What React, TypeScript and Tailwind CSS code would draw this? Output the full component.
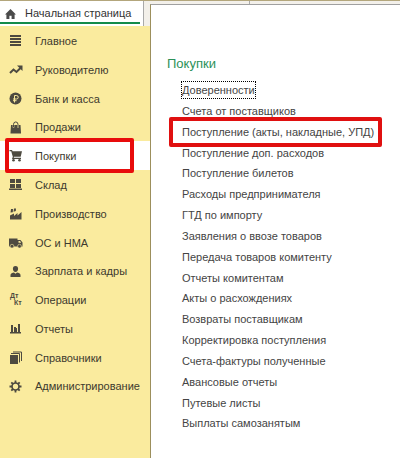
import type { ReactNode } from "react";

type Section = { name: string; icon: ReactNode };

const sections: Section[] = [
  { name: "Главное", icon: <path d="M0 0h11v2H0zM0 3h11v2H0zM0 6h11v2H0zM0 9h11v2H0z" /> },
  {
    name: "Руководителю",
    icon: (
      <>
        <path d="M0 9l3.500-3.500 3 2.500 4-4" fill="none" stroke="currentColor" strokeWidth="2" />
        <path d="M7 1.500H12.500v5.500z" />
      </>
    ),
  },
  {
    name: "Банк и касса",
    icon: (
      <>
        <circle cx="5.500" cy="5.500" r="6" />
        <path d="M4.500 9.500V2.500h2a1.700 1.700 0 0 1 0 3.500H3M3 7.700H6.500" fill="none" stroke="#faeb9e" strokeWidth="1" />
      </>
    ),
  },
  {
    name: "Продажи",
    icon: (
      <>
        <path d="M1 3h9.500l0.500 8.500H0.500z" />
        <path d="M3.500 5.500V2.500a2.200 2.500 0 0 1 4.500 0v3" fill="none" stroke="#faeb9e" strokeWidth="1.600" />
        <path d="M3.500 5V2.500a2.200 2.500 0 0 1 4.500 0v2.500" fill="none" stroke="currentColor" strokeWidth="1" />
      </>
    ),
  },
  {
    name: "Покупки",
    icon: (
      <>
        <path d="M-0.500 0h2.500l0.600 1.300H12L10.700 6.800H4L3.700 7.700h7.300v1.300H2L2.800 6.800 1.200 1.200H-0.500z" />
        <circle cx="3.500" cy="10.200" r="1.300" />
        <circle cx="9.500" cy="10.200" r="1.300" />
      </>
    ),
  },
  {
    name: "Склад",
    icon: <path d="M0 0h5v4H0zM6 0h5v4H6zM0 5h5v4H0zM6 5h5v4H6zM-1 9.500h13v1.500H-1z" />,
  },
  {
    name: "Производство",
    icon: <path d="M0 11.500V7.500l4-2v2.500l3.500-3v2.500L11.500 4v7.500zM0.500 4.500L1 1h2L2.800 4.200zM3.500 3.800L4 0.500h2L5.800 3z" />,
  },
  {
    name: "ОС и НМА",
    icon: (
      <>
        <path d="M-1 1.500h8.500v8H-1zM7.500 3h3L12.500 5.500v4h-5z" />
        <circle cx="2" cy="9.200" r="1.900" stroke="#faeb9e" strokeWidth="0.600" />
        <circle cx="9.500" cy="9.200" r="1.900" stroke="#faeb9e" strokeWidth="0.600" />
        <path d="M8.500 4h1.500L11.200 5.700H8.500z" fill="#faeb9e" />
      </>
    ),
  },
  {
    name: "Зарплата и кадры",
    icon: <path d="M5.500 0c1.900 0 2.600 1.200 2.600 2.700S7 6 5.500 6 2.900 4.200 2.900 2.700 3.600 0 5.500 0zM0.500 11V9C0.500 7.500 2.500 6.800 4 6.500L5.500 7.800 7 6.500C8.500 6.800 10.500 7.500 10.500 9v2z" />,
  },
  {
    name: "Операции",
    icon: (
      <g fontFamily="Liberation Sans, sans-serif" fontSize="7" fontWeight="700">
        <text x="0" y="4">Дт</text>
        <text x="4" y="11">Кт</text>
      </g>
    ),
  },
  { name: "Отчеты", icon: <path d="M1 2h2v7H1zM4 4h2v5H4zM6 5h1v4h-1zM8 1h2v8H8zM0 9h11v1.500H0z" /> },
  {
    name: "Справочники",
    icon: (
      <>
        <path d="M0 3h8v9H0z" />
        <path d="M1 1.500h8.500v9M3 0h8.500v9" fill="none" stroke="currentColor" strokeWidth="1" />
      </>
    ),
  },
  {
    name: "Администрирование",
    icon: (
      <>
        <circle cx="5.500" cy="5.500" r="3.500" fill="none" stroke="currentColor" strokeWidth="1.700" />
        <path
          d="M5.500 -0.500v2.500M5.500 9V11.500M-0.500 5.500h2.500M9 5.500H11.500M1.300 1.300l1.700 1.700M8 8l1.700 1.700M9.700 1.300L8 3M3 8l-1.700 1.700"
          stroke="currentColor"
          strokeWidth="1.800"
        />
      </>
    ),
  },
];

const commands = [
  "Доверенности",
  "Счета от поставщиков",
  "Поступление (акты, накладные, УПД)",
  "Поступление доп. расходов",
  "Поступление билетов",
  "Расходы предпринимателя",
  "ГТД по импорту",
  "Заявления о ввозе товаров",
  "Передача товаров комитенту",
  "Отчеты комитентам",
  "Акты о расхождениях",
  "Возвраты поставщикам",
  "Корректировка поступления",
  "Счета-фактуры полученные",
  "Авансовые отчеты",
  "Путевые листы",
  "Выплаты самозанятым",
];

const activeSection = "Покупки";
const focusedCommand = "Доверенности";
const markedCommand = "Поступление (акты, накладные, УПД)";

export default function App() {
  return (
    <div className="flex min-h-screen border-t border-[#b3a67c] bg-[#f3f0ea] font-['Liberation_Sans',Arial,sans-serif] text-[11px] text-[#444444]">
      {/* Sections */}
      <aside className="flex w-[150px] shrink-0 flex-col">
        <div className="flex h-[25px]">
          <button className="flex w-[144px] flex-col border-r border-[#a9a9a9] bg-white text-left text-[#333333]">
            <span className="flex h-[21px] items-center gap-[9px] pt-1 pl-[5px] whitespace-nowrap">
              <svg viewBox="0 0 12 11" className="h-[10px] w-[11px] shrink-0 fill-[#4a4a4a]">
                <path d="M6 0l6 6h-1.500v5H7.200V7.500H4.800V11H1.500V6H0z" />
              </svg>
              Начальная страница
            </span>
            <span className="mr-[3px] h-0.5 self-stretch bg-[#138b4a]" />
          </button>
        </div>
        <nav className="flex-1 bg-[#faeb9e]">
          <ul className="grid h-[374px] auto-rows-fr">
            {sections.map(({ name, icon }) => (
              <li key={name} className={name === activeSection ? "relative bg-white" : ""}>
                <button className="flex h-full w-full items-center gap-[13px] pt-0.5 pl-[10px] text-left whitespace-nowrap text-[#3d3a2e]">
                  <svg viewBox="0 0 12 12" className="size-3 shrink-0 overflow-visible fill-current text-[#4d4a40]">
                    {icon}
                  </svg>
                  {name}
                </button>
                {name === activeSection && (
                  <span className="pointer-events-none absolute -inset-y-[3px] right-4 left-[5px] rounded-xs border-4 border-[#e80c0c]" />
                )}
              </li>
            ))}
          </ul>
        </nav>
      </aside>

      {/* Commands of the open section */}
      <div className="flex min-w-0 flex-1 flex-col">
        <div className="flex h-[3px]">
          <span className="w-[100px] border-r border-[#a9a9a9]" />
        </div>
        <main className="flex-1 border-t border-l border-t-[#a0a0a0] border-l-[#9c8f5c] bg-white pt-[49px] pl-4">
          <h1 className="h-[26px] text-[13px] leading-5 text-[#2c9158]">{activeSection}</h1>
          <ul className="grid h-[354px] auto-rows-fr pl-[15px]">
            {commands.map((name) => (
              <li key={name} className="flex items-center whitespace-nowrap">
                <a
                  href="#"
                  className={
                    name === focusedCommand
                      ? "leading-4 outline-1 outline-dotted outline-black"
                      : name === markedCommand
                        ? "relative leading-4"
                        : ""
                  }
                >
                  {name}
                  {name === markedCommand && (
                    <span className="pointer-events-none absolute -top-[7px] -right-2 -bottom-[7px] -left-[13px] rounded-xs border-4 border-[#e01010]" />
                  )}
                </a>
              </li>
            ))}
          </ul>
        </main>
      </div>
    </div>
  );
}
